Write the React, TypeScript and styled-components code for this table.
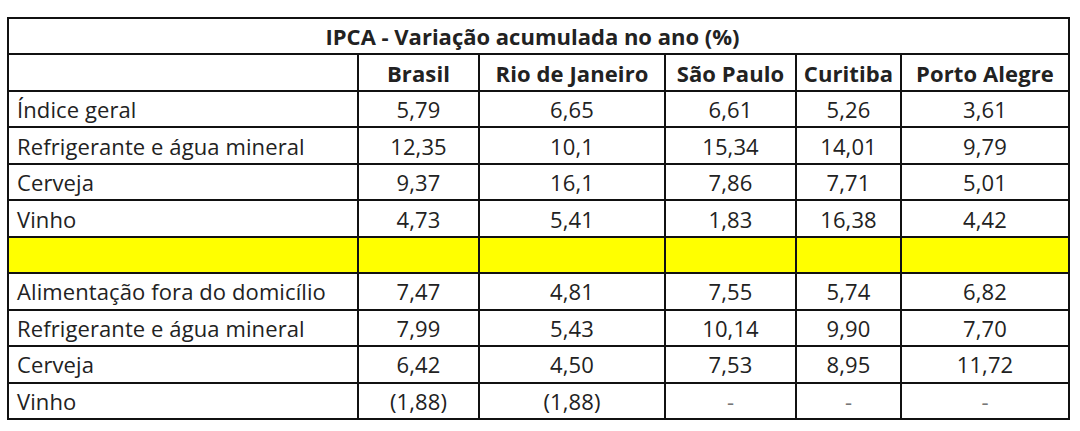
import React from "react";
import styled, { createGlobalStyle } from "styled-components";

const Global = createGlobalStyle`
  html, body { margin: 0; padding: 0; background: #ffffff; }
  body { font-family: "Open Sans", "Noto Sans", sans-serif; color: #222222; }
`;

const Page = styled.div`
  padding: 17px 0 0 7px;
`;

const Table = styled.table`
  width: 1061px;
  border-collapse: collapse;
  table-layout: fixed;
  border: 2px solid #111111;
  font-size: 22px;
  letter-spacing: 0.1px;
`;

const Row = styled.tr<{ $h?: number }>`
  height: ${(p) => p.$h ?? 36.45}px;
`;

const TitleCell = styled.th`
  border: 2px solid #111111;
  font-weight: 700;
  font-size: 22px;
  letter-spacing: 0;
  text-align: center;
  padding: 0 12px 0 0;
  vertical-align: middle;
  white-space: nowrap;
`;

const HeadCell = styled.th`
  border: 2px solid #111111;
  font-weight: 700;
  text-align: center;
  padding: 0;
  vertical-align: middle;
  white-space: nowrap;
`;

const LabelCell = styled.td<{ $yellow?: boolean }>`
  border: 2px solid #111111;
  text-align: left;
  padding: 0 0 0 8px;
  vertical-align: middle;
  white-space: nowrap;
  background: ${(p) => (p.$yellow ? "#ffff00" : "transparent")};
`;

const NumCell = styled.td<{ $yellow?: boolean; $muted?: boolean }>`
  border: 2px solid #111111;
  text-align: center;
  padding: 0;
  vertical-align: middle;
  white-space: nowrap;
  color: ${(p) => (p.$muted ? "#777" : "inherit")};
  background: ${(p) => (p.$yellow ? "#ffff00" : "transparent")};
`;

const widths = [350, 121, 186, 131, 105, 168];
const cities = ["Brasil", "Rio de Janeiro", "São Paulo", "Curitiba", "Porto Alegre"];

type R = { label: string; values: string[] } | null;

const rows: R[] = [
  { label: "Índice geral", values: ["5,79", "6,65", "6,61", "5,26", "3,61"] },
  { label: "Refrigerante e água mineral", values: ["12,35", "10,1", "15,34", "14,01", "9,79"] },
  { label: "Cerveja", values: ["9,37", "16,1", "7,86", "7,71", "5,01"] },
  { label: "Vinho", values: ["4,73", "5,41", "1,83", "16,38", "4,42"] },
  null,
  { label: "Alimentação fora do domicílio", values: ["7,47", "4,81", "7,55", "5,74", "6,82"] },
  { label: "Refrigerante e água mineral", values: ["7,99", "5,43", "10,14", "9,90", "7,70"] },
  { label: "Cerveja", values: ["6,42", "4,50", "7,53", "8,95", "11,72"] },
  { label: "Vinho", values: ["(1,88)", "(1,88)", "-", "-", "-"] },
];

export default function App() {
  return (
    <>
      <Global />
      <Page>
        <Table>
          <colgroup>
            {widths.map((w, i) => (
              <col key={i} style={{ width: w }} />
            ))}
          </colgroup>
          <thead>
            <Row $h={36}>
              <TitleCell colSpan={6}>IPCA - Variação acumulada no ano (%)</TitleCell>
            </Row>
            <Row $h={37}>
              <HeadCell />
              {cities.map((c) => (
                <HeadCell key={c}>{c}</HeadCell>
              ))}
            </Row>
          </thead>
          <tbody>
            {rows.map((r, i) =>
              r ? (
                <Row key={i}>
                  <LabelCell>{r.label}</LabelCell>
                  {r.values.map((v, j) => (
                    <NumCell key={j} $muted={v === "-"}>
                      {v}
                    </NumCell>
                  ))}
                </Row>
              ) : (
                <Row key={i}>
                  <LabelCell $yellow />
                  {cities.map((c) => (
                    <NumCell key={c} $yellow />
                  ))}
                </Row>
              )
            )}
          </tbody>
        </Table>
      </Page>
    </>
  );
}
